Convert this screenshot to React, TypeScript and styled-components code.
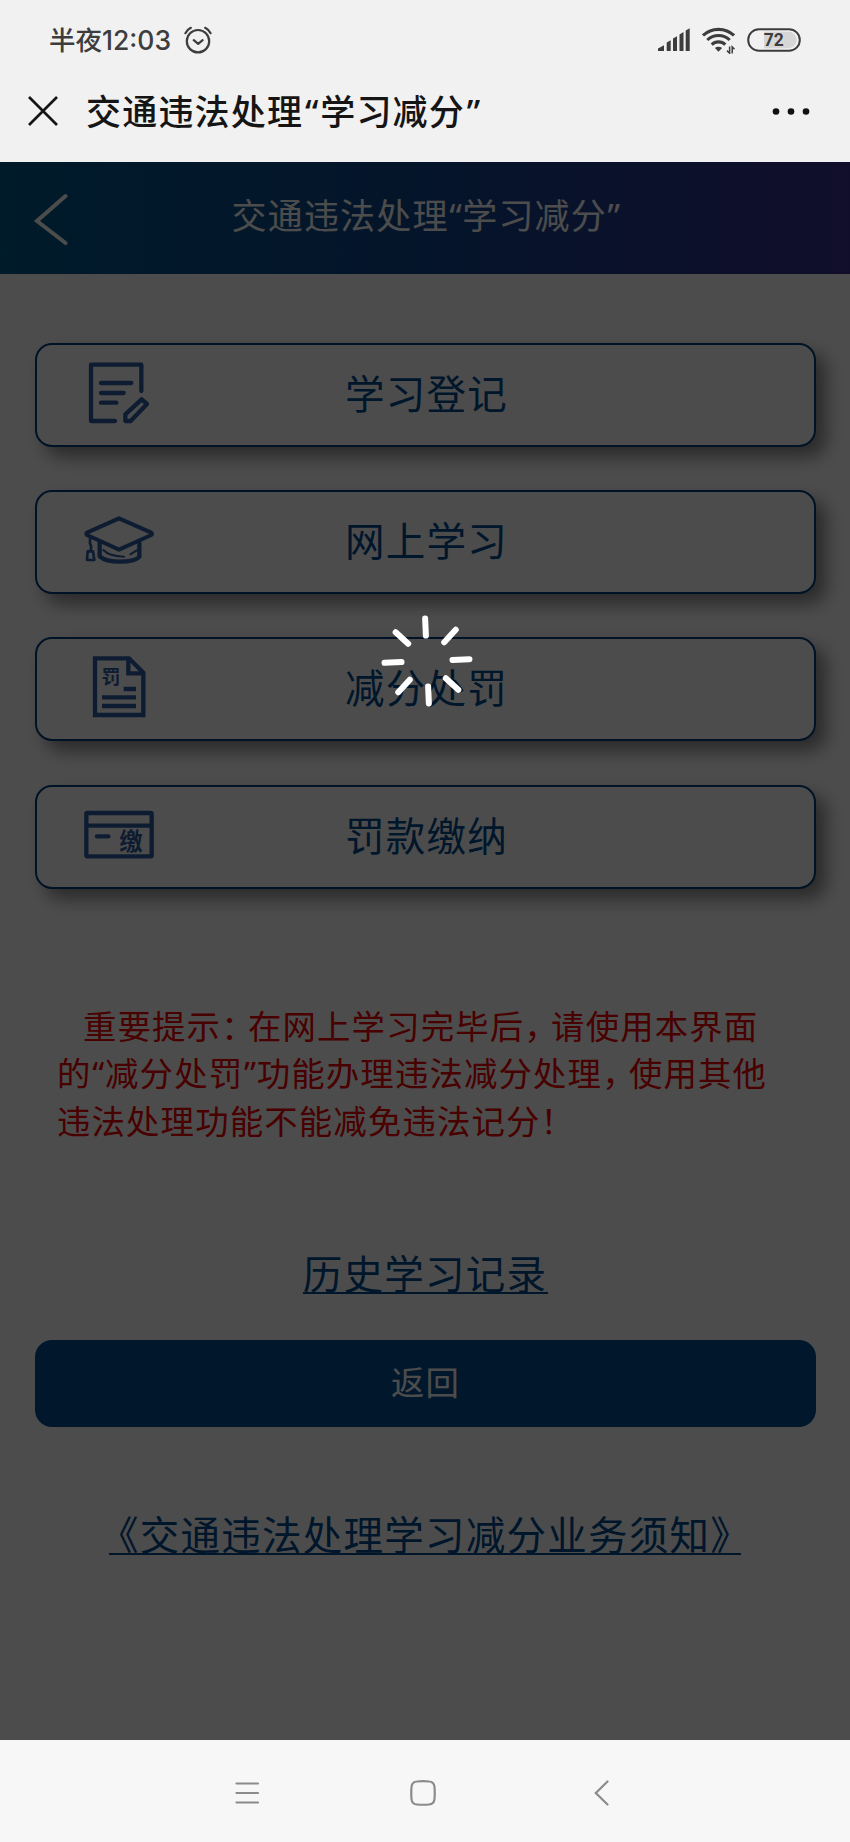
import React from "react";
import styled, { createGlobalStyle } from "styled-components";

const GlobalStyle = createGlobalStyle`
  body { margin: 0; background: #fff; }
  * { box-sizing: border-box; }
  svg { display: block; }
`;

const Screen = styled.div`
  width: 850px;
  height: 1842px;
  display: flex;
  flex-direction: column;
  font-family: "Noto Sans", "Noto Sans CJK SC", sans-serif;
`;

/* System status bar and app title */
const TopArea = styled.header`
  height: 162px;
  background: #f1f1f1;
  color: #151515;
`;
const StatusBar = styled.div`
  height: 80px;
  padding: 0 49px 0 49px;
  display: flex;
  align-items: center;
  justify-content: space-between;
  color: #3d3d3d;
`;
const StatusGroup = styled.div<{ $gap: number }>`
  display: flex;
  align-items: center;
  gap: ${(p) => p.$gap}px;
`;
const Clock = styled.span`
  font: 500 26.5px/40px Inter, "Noto Sans CJK SC", sans-serif;
`;
const AppBar = styled.div`
  height: 61px;
  padding: 0 40px 0 27px;
  display: flex;
  align-items: center;
`;
const AppTitle = styled.h1`
  flex: 1;
  margin: 3px 0 0 27px;
  font-size: 35px;
  font-weight: 500;
  line-height: 50px;
  letter-spacing: 1.2px;
  white-space: nowrap;
`;
const Quote = styled.span<{ $width: number }>`
  display: inline-block;
  width: ${(p) => p.$width}px;
  text-align: center;
  letter-spacing: 0;
`;

/* Web page under the loading mask */
const Page = styled.main`
  position: relative;
  flex: 1;
  display: flex;
  flex-direction: column;
  background: #fff;
`;
const PageHeader = styled.div`
  height: 112px;
  padding-left: 33px;
  display: flex;
  align-items: center;
  background: linear-gradient(90deg, #005a8e 0%, #10458e 50%, #3a3190 100%);
  color: #fff;
`;
const PageTitle = styled.h2`
  flex: 1;
  margin: 0 67px 4px 0;
  text-align: center;
  font-size: 35px;
  font-weight: 400;
  line-height: 50px;
  letter-spacing: 1.2px;
`;
const Menu = styled.nav`
  margin: 69px 34px 0 35px;
  display: flex;
  flex-direction: column;
  gap: 43.2px;
`;
const MenuButton = styled.button`
  height: 104px;
  padding: 0 120px 0 42px;
  display: flex;
  align-items: center;
  border: 2px solid #003f7c;
  border-radius: 17px;
  background: #fff;
  box-shadow: 10px 10px 18px rgba(0, 0, 0, 0.45);
  color: #004a90;
  font-family: inherit;
`;
const MenuLabel = styled.span`
  flex: 1;
  margin-bottom: 2px;
  text-align: center;
  font-size: 39.5px;
  font-weight: 400;
  line-height: 60px;
  letter-spacing: 1.2px;
`;
const Notice = styled.p`
  margin: 114px 50px 0 57px;
  color: #f00000;
  font-size: 33.4px;
  font-weight: 400;
  line-height: 47.5px;
  letter-spacing: 1.15px;
  white-space: nowrap;
`;
const NoticeLine = styled.span<{ $indent?: number }>`
  display: block;
  padding-left: ${(p) => p.$indent ?? 0}px;
`;
const Mark = styled.span`
  letter-spacing: -6.6px;
`;
const Link = styled.a<{ $top: number; $width: number }>`
  align-self: center;
  width: ${(p) => p.$width}px;
  height: 41px;
  margin-top: ${(p) => p.$top}px;
  display: flex;
  justify-content: center;
  border-bottom: 2px solid #004a90;
  color: #004a90;
  font-size: 39.5px;
  font-weight: 400;
  line-height: 42px;
  letter-spacing: 1.25px;
  white-space: nowrap;
`;
const BackButton = styled.button`
  height: 87px;
  margin: 46px 34px 0 35px;
  padding: 0 0 6px;
  border: 0;
  border-radius: 17px;
  background: #004d94;
  color: #fff;
  font-family: inherit;
  font-size: 33.4px;
  font-weight: 400;
  letter-spacing: 1px;
`;
const LoadingMask = styled.div`
  position: absolute;
  inset: 0;
  padding: 449px 0 0 4px;
  display: flex;
  justify-content: center;
  align-items: flex-start;
  background: rgba(0, 0, 0, 0.7);
`;

const NavBar = styled.footer`
  height: 102px;
  padding: 3px 240px 0 234px;
  display: flex;
  align-items: center;
  background: #f7f7f7;
`;
const NavItem = styled.div<{ $after?: number }>`
  margin-right: ${(p) => p.$after ?? 0}px;
`;

const iconBlue = "#2f5ea6";

function AlarmIcon() {
  return (
    <svg width="28" height="28" viewBox="0 0 28 28" fill="none" stroke="#3d3d3d" strokeWidth="2.2" strokeLinecap="round" strokeLinejoin="round">
      <circle cx="14" cy="15.2" r="11.2" />
      <path d="M9.8 14.2l4.4 3.6 4.4-3.6M1.4 7.2C2.6 5 4.3 3 6.8 1.8M26.6 7.2C25.4 5 23.7 3 21.2 1.8" />
    </svg>
  );
}

function SignalIcon() {
  return (
    <svg width="32" height="24" viewBox="0 0 32 24" fill="#3d3d3d">
      <path d="M0 23v-2.4l6-3.4V23zM8.700 14.600l4-2.300V23h-4zM15 10.600l4-2.300V23h-4zM21.500 6.400l4-2.300V23h-4zM27.700 2.500l4-2.300V23h-4z" />
    </svg>
  );
}

function WifiIcon() {
  return (
    <svg width="33" height="27" viewBox="0 0 33 27" fill="none" stroke="#3d3d3d">
      <g strokeWidth="3.100">
        <path d="M1 8.500C9.500.300 23.500.300 32 8.500" />
        <path d="M5.300 13c6.300-6 16.100-6 22.400 0" />
        <path d="M9.700 17.600c3.800-3.600 9.800-3.600 13.600 0" />
      </g>
      <path d="M12.900 21.100c2-1.700 5.200-1.700 7.200 0l-3.600 3.700z" fill="#3d3d3d" stroke="none" />
      <path d="M27.600 19.500v6.700l-2.600-2.600M30.200 26.500v-6.700l2.300 2.500" strokeWidth="1.500" />
    </svg>
  );
}

function BatteryIcon() {
  return (
    <svg width="54" height="24" viewBox="0 0 54 24">
      <path d="M17 3.800h24.500a8.200 8.200 0 0 1 0 16.400H17z" fill="#d6d6d6" />
      <rect x="1.200" y="1.200" width="51.600" height="21.600" rx="10.800" fill="none" stroke="#3d3d3d" strokeWidth="2" />
      <text x="26.700" y="18.200" textAnchor="middle" fontFamily="Roboto, sans-serif" fontSize="17.500" fontWeight="700" fill="#3d3d3d">72</text>
    </svg>
  );
}

function RegisterIcon() {
  return (
    <svg width="80" height="80" viewBox="177 75 240 240" fill="none" stroke={iconBlue} strokeLinecap="round" strokeLinejoin="round">
      <path d="M364 183V104H213V273H285" strokeWidth="13" />
      <path d="M243 159H334M243 189H311M243 218H289" strokeWidth="13" />
      <path d="M316 273V253L365 208L381 222L332 273Z" strokeWidth="13" />
    </svg>
  );
}

function StudyIcon() {
  return (
    <svg width="80" height="80" viewBox="177 516 240 240" fill="none" stroke={iconBlue} strokeLinecap="round" strokeLinejoin="round">
      <path d="M297 565L394 608Q398 612 394 615L297 659L201 615Q197 611 201 608Z" strokeWidth="12" />
      <path d="M239 638V679Q257 695 300 695T358 681V639" strokeWidth="13" />
      <path d="M250 660Q266 678 312 680M350 661L331 673" strokeWidth="6" />
      <path d="M210 623V640Q216 651 212 660M203 664H219L223 690H201Z" strokeWidth="8" />
    </svg>
  );
}

function PenaltyIcon() {
  return (
    <svg width="80" height="80" viewBox="177 74 240 240" fill="none" stroke={iconBlue} strokeWidth="13">
      <path d="M225 102H327L370 145V272H225Z" />
      <path d="M325 104V147H368" />
      <path d="M311 194H348M246 219H348M246 245H348" />
      <text x="273" y="178" textAnchor="middle" fontFamily='"Noto Sans CJK SC", sans-serif' fontSize="57" fontWeight="700" fill={iconBlue} stroke="none">罚</text>
    </svg>
  );
}

function PaymentIcon() {
  return (
    <svg width="80" height="80" viewBox="177 515 240 240" fill="none" stroke={iconBlue} strokeWidth="13">
      <rect x="199" y="563" width="196" height="130" rx="3" />
      <path d="M200 601H394" />
      <path d="M231 633H265" strokeLinecap="round" />
      <text x="333" y="674" textAnchor="middle" fontFamily='"Noto Sans CJK SC", sans-serif' fontSize="70" fontWeight="700" fill={iconBlue} stroke="none">缴</text>
    </svg>
  );
}

function Spinner() {
  return (
    <svg width="100" height="100" viewBox="-50 -50 100 100" stroke="#fff" strokeWidth="6" strokeLinecap="round">
      <g transform="rotate(-2.500)">
        {[0, 45, 90, 135, 180, 225, 270, 315].map((angle) => (
          <path key={angle} d="M0-25.500V-42.500" transform={`rotate(${angle})`} />
        ))}
      </g>
    </svg>
  );
}

const menuItems = [
  { label: "学习登记", Icon: RegisterIcon },
  { label: "网上学习", Icon: StudyIcon },
  { label: "减分处罚", Icon: PenaltyIcon },
  { label: "罚款缴纳", Icon: PaymentIcon },
];

export default function App() {
  return (
    <Screen>
      <GlobalStyle />
      <TopArea>
        <StatusBar>
          <StatusGroup $gap={13}>
            <Clock>半夜12:03</Clock>
            <AlarmIcon />
          </StatusGroup>
          <StatusGroup $gap={12}>
            <SignalIcon />
            <WifiIcon />
            <BatteryIcon />
          </StatusGroup>
        </StatusBar>
        <AppBar>
          <svg width="32" height="32" viewBox="0 0 32 32" stroke="#151515" strokeWidth="2.700">
            <path d="M2 2L30 30M30 2L2 30" />
          </svg>
          <AppTitle>
            交通违法处理<Quote $width={17}>“</Quote>学习减分<Quote $width={17}>”</Quote>
          </AppTitle>
          <svg width="38" height="8" viewBox="0 0 38 8" fill="#111">
            <circle cx="4" cy="4.500" r="3.300" />
            <circle cx="19" cy="4.500" r="3.300" />
            <circle cx="34" cy="4.500" r="3.300" />
          </svg>
        </AppBar>
      </TopArea>

      <Page>
        <PageHeader>
          <svg width="36" height="54" viewBox="0 0 36 54" fill="none" stroke="#fff" strokeWidth="4" strokeLinecap="round">
            <path d="M32.500 5L4 30L32.500 52" />
          </svg>
          <PageTitle>
            交通违法处理<Quote $width={13.5}>“</Quote>学习减分<Quote $width={13.5}>”</Quote>
          </PageTitle>
        </PageHeader>
        <Menu>
          {menuItems.map(({ label, Icon }) => (
            <MenuButton key={label}>
              <Icon />
              <MenuLabel>{label}</MenuLabel>
            </MenuButton>
          ))}
        </Menu>
        <Notice>
          <NoticeLine $indent={26}>
            重要提示<Mark>：</Mark>在网上学习完毕后<Mark>，</Mark>请使用本界面
          </NoticeLine>
          <NoticeLine>
            的<Quote $width={13.5}>“</Quote>减分处罚<Quote $width={13.5}>”</Quote>功能办理违法减分处理<Mark>，</Mark>使用其他
          </NoticeLine>
          <NoticeLine>违法处理功能不能减免违法记分！</NoticeLine>
        </Notice>
        <Link $top={108} $width={245}>历史学习记录</Link>
        <BackButton>返回</BackButton>
        <Link $top={87} $width={632}>《交通违法处理学习减分业务须知》</Link>
        <LoadingMask>
          <Spinner />
        </LoadingMask>
      </Page>

      <NavBar>
        <NavItem $after={150}>
          <svg width="26" height="26" viewBox="0 0 26 26" stroke="#8b8b8b" strokeWidth="2.200" strokeLinecap="round">
            <path d="M2.500 3.500H24M2.500 13H24M2.500 22.500H24" />
          </svg>
        </NavItem>
        <NavItem $after={158}>
          <svg width="26" height="26" viewBox="0 0 26 26" fill="none" stroke="#8b8b8b" strokeWidth="2.200">
            <path d="M7 1.500Q13 .900 19 1.500Q24 1.800 24.500 7Q25 13 24.500 19Q24 24.200 19 24.500Q13 25 7 24.500Q2 24.200 1.500 19Q1 13 1.500 7Q2 1.800 7 1.500Z" />
          </svg>
        </NavItem>
        <NavItem>
          <svg width="16" height="26" viewBox="0 0 16 26" fill="none" stroke="#8b8b8b" strokeWidth="2.200" strokeLinecap="round">
            <path d="M13.500 1.500L1.800 13L13.500 24.500" />
          </svg>
        </NavItem>
      </NavBar>
    </Screen>
  );
}
